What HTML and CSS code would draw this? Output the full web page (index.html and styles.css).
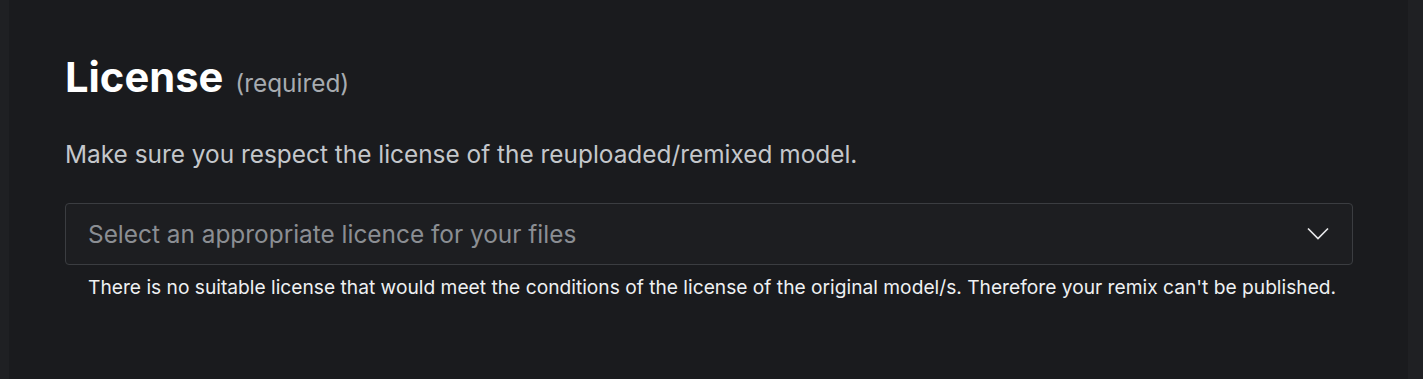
FILE: index.html
```html
<!DOCTYPE html>
<html>
<head>
<meta charset="utf-8">
<link rel="stylesheet" href="styles.css">
</head>
<body>
<div class="page">
  <section class="card">
    <h2 class="title">License <span class="req">(required)</span></h2>
    <p class="desc">Make sure you respect the license of the reuploaded/remixed model.</p>
    <div class="select">
      <span class="placeholder">Select an appropriate licence for your files</span>
      <svg class="chev" width="22" height="14" viewBox="0 0 22 14"><path d="M1 1.5 L11 11.5 L21 1.5" fill="none" stroke="#e6e7e9" stroke-width="1.7"/></svg>
    </div>
    <p class="help">There is no suitable license that would meet the conditions of the license of the original model/s. Therefore your remix can't be published.</p>
  </section>
</div>
</body>
</html>
```
FILE: styles.css
```css
html, body {
  margin: 0;
  padding: 0;
  background: #1f2023;
  height: 100%;
  overflow: hidden;
}
.page {
  display: flex;
  padding: 0 15px 0 9px;
  height: 100%;
  font-family: "Inter", "Liberation Sans", sans-serif;
}
.card {
  flex: 1;
  background: #1a1b1e;
  padding: 50px 55px 80px 56px;
}
.title {
  margin: 0;
  font-size: 41.7px;
  font-weight: 700;
  color: #ffffff;
  line-height: 54px;
}
.req {
  font-size: 24.4px;
  font-weight: 400;
  color: #a7abb0;
  margin-left: 2px;
}
.desc {
  margin: 29px 0 0;
  font-size: 24.4px;
  line-height: 30px;
  color: #c4c7cb;
}
.select {
  margin-top: 34px;
  height: 60px;
  border: 1px solid #3b3d41;
  border-radius: 4px;
  background: #1d1e21;
  display: flex;
  align-items: center;
  justify-content: space-between;
  padding: 0 23px 0 22px;
}
.placeholder {
  font-size: 24.4px;
  color: #8b8e93;
}
.help {
  margin: 10px 0 0 23px;
  font-size: 19.2px;
  line-height: 24px;
  color: #eef0f2;
}
```
